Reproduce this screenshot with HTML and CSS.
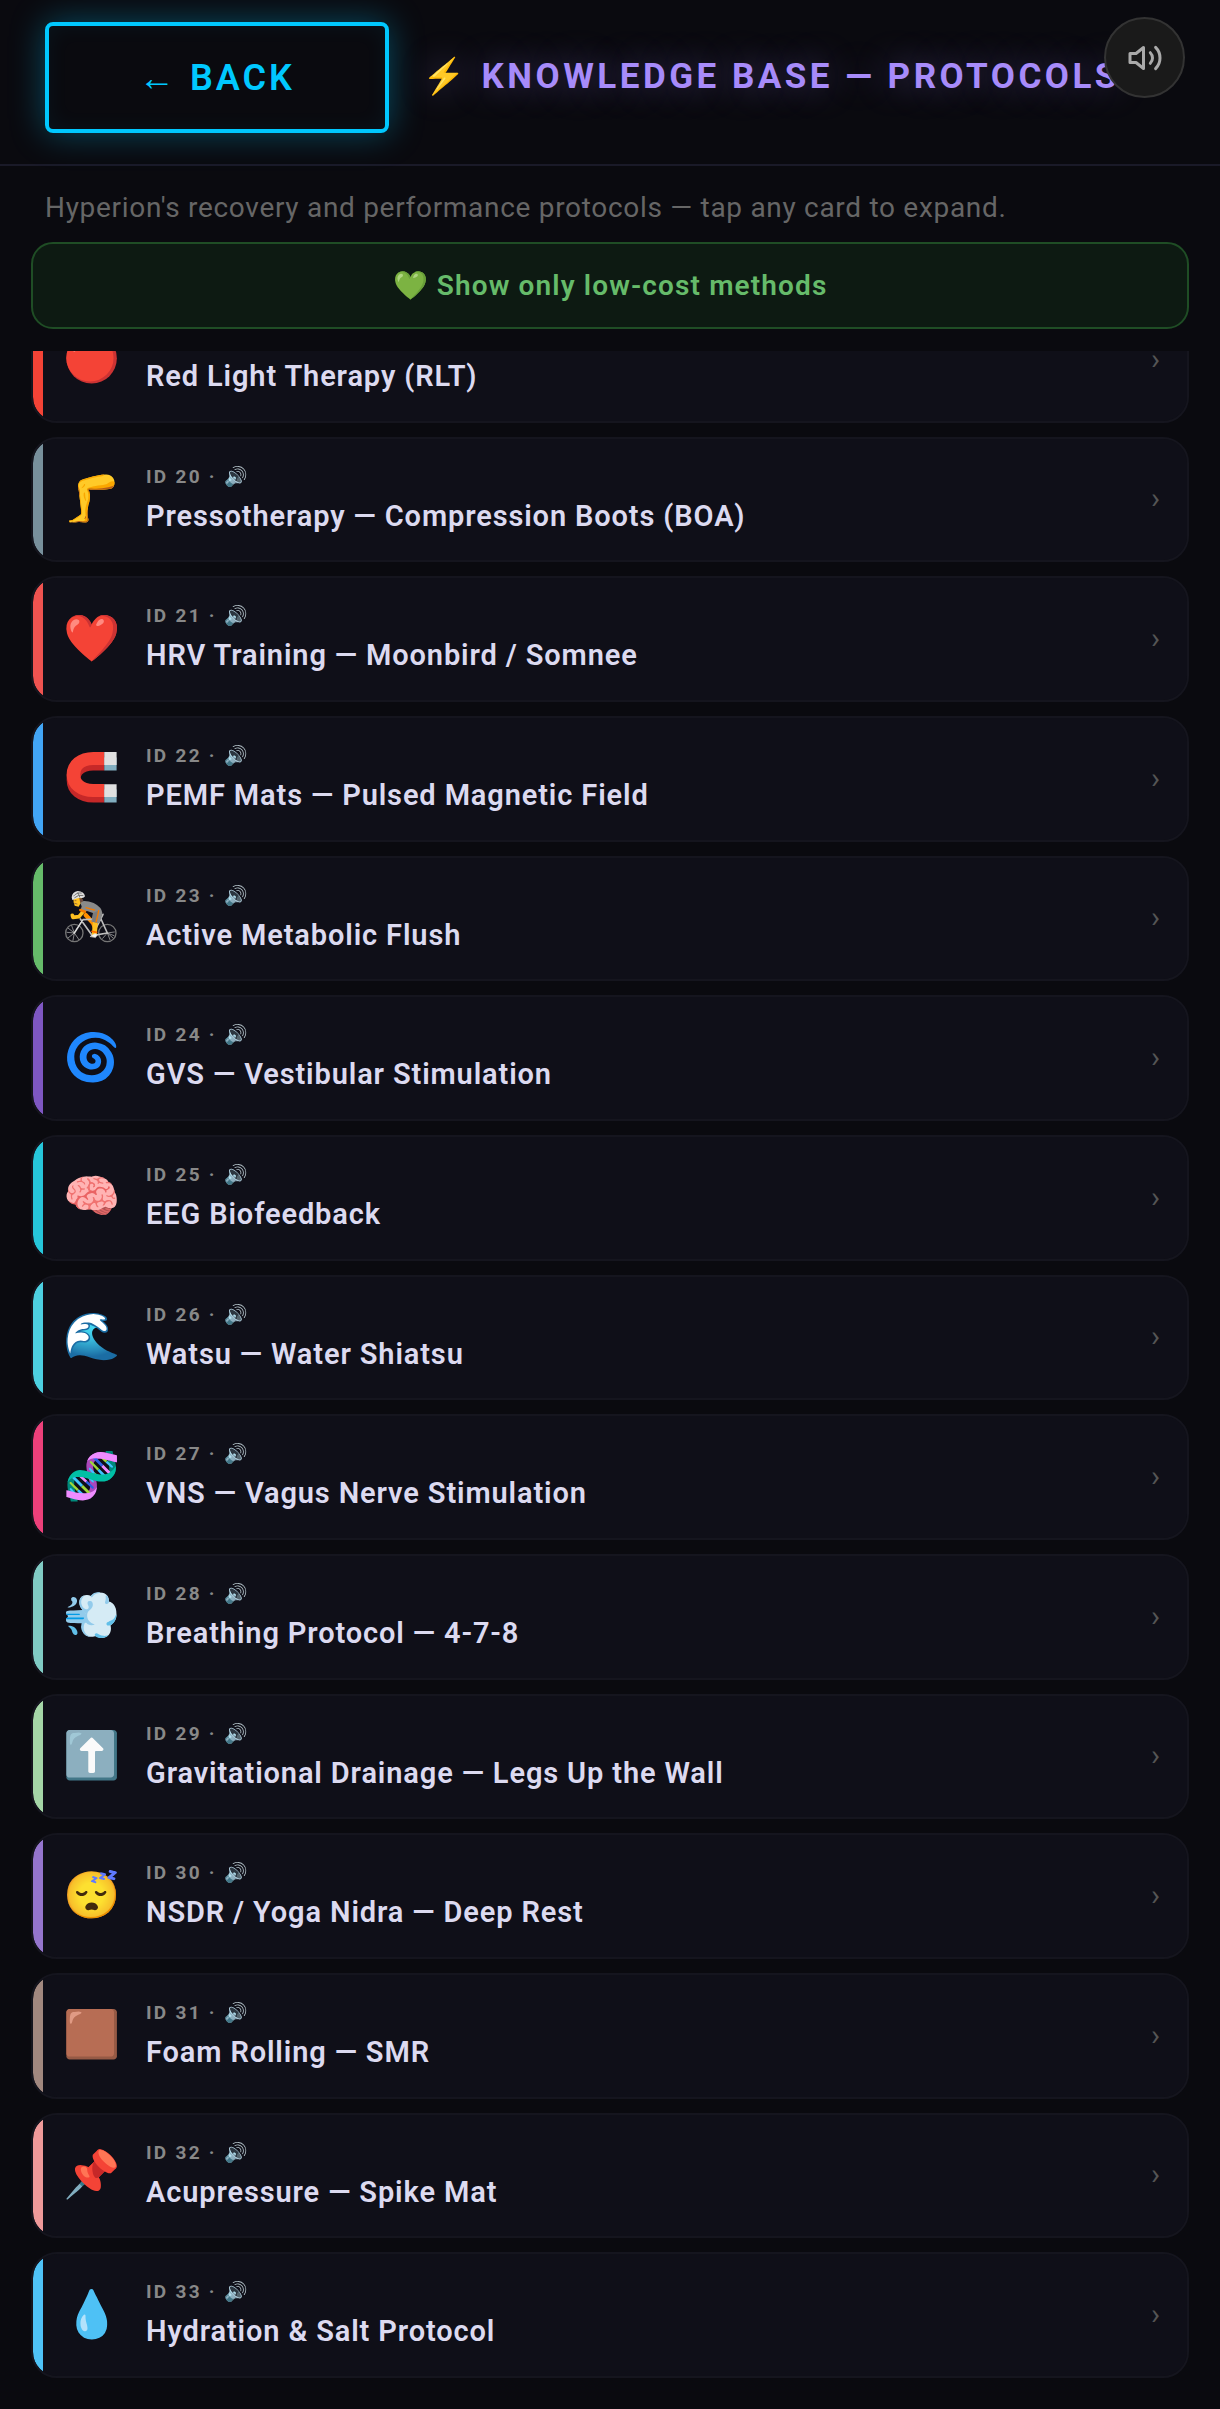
FILE: index.html
```html
<!DOCTYPE html>
<html lang="en">
<head>
  <meta charset="UTF-8">
  <title>Knowledge Base — Protocols</title>
  <meta name="viewport" content="width=device-width, initial-scale=1.0">
  <link rel="stylesheet" href="styles.css">
</head>
<body>

  <button class="mute" aria-label="Toggle sound">
    <svg viewBox="0 0 24 24" fill="none" stroke="currentColor" stroke-width="2" stroke-linecap="round" stroke-linejoin="round">
      <polygon points="11 5 6 9 2 9 2 15 6 15 11 19 11 5"/>
      <path d="M15.54 8.46a5 5 0 0 1 0 7.07"/>
      <path d="M19.07 4.93a10 10 0 0 1 0 14.14"/>
    </svg>
  </button>

  <header class="header">
    <button class="back">← BACK</button>
    <h1>⚡ KNOWLEDGE BASE — PROTOCOLS</h1>
  </header>

  <p class="intro">Hyperion's recovery and performance protocols — tap any card to expand.</p>

  <button class="filter">💚 Show only low-cost methods</button>

  <main class="list" id="list">
    <button class="card red">
      <span class="icon">🔴</span>
      <span class="info"><span class="id">ID 19 · 🔊</span><span class="name">Red Light Therapy (RLT)</span></span>
      <span class="arrow">›</span>
    </button>
    <button class="card slate">
      <span class="icon">🦵</span>
      <span class="info"><span class="id">ID 20 · 🔊</span><span class="name">Pressotherapy — Compression Boots (BOA)</span></span>
      <span class="arrow">›</span>
    </button>
    <button class="card coral">
      <span class="icon">❤️</span>
      <span class="info"><span class="id">ID 21 · 🔊</span><span class="name">HRV Training — Moonbird / Somnee</span></span>
      <span class="arrow">›</span>
    </button>
    <button class="card blue">
      <span class="icon">🧲</span>
      <span class="info"><span class="id">ID 22 · 🔊</span><span class="name">PEMF Mats — Pulsed Magnetic Field</span></span>
      <span class="arrow">›</span>
    </button>
    <button class="card green">
      <span class="icon">
        <svg class="cyclist" viewBox="0 0 156 156" fill="none" stroke-linecap="round" stroke-linejoin="round">
          <!-- wheels -->
          <g stroke="#757575" stroke-width="4">
            <circle cx="28" cy="126" r="26"/>
            <circle cx="127" cy="126" r="26"/>
          </g>
          <g stroke="#bdbdbd" stroke-width="2">
            <path d="M28 126L10 112M28 126L6 124M28 126L10 140M28 126L24 148M28 126L42 146M28 126L20 104"/>
            <path d="M127 126l20 8M127 126l17 15M127 126l8 20M127 126l21-3M127 126l-14 16"/>
          </g>
          <!-- far leg -->
          <path d="M62 72l22 24 6 14" stroke="#ff8f00" stroke-width="13"/>
          <!-- frame -->
          <path d="M28 126L54 86L107 84M46 84L82 134M82 134L114 70M108 84L127 126L82 134" stroke="#bdbdbd" stroke-width="5"/>
          <path d="M28 126L52 88" stroke="#e0e0e0" stroke-width="3"/>
          <!-- near leg -->
          <path d="M91 94L88 130" stroke="#ffc020" stroke-width="15"/>
          <path d="M81 121l14 3" stroke="#ff6d00" stroke-width="5"/>
          <path d="M76 136l14-8 7 3-5 8z" fill="#f5f5f5" stroke="#e0e0e0" stroke-width="2"/>
          <!-- jersey and shorts -->
          <path d="M44 32Q62 26 86 36Q110 48 112 66Q110 82 103 97L79 92L84 66L66 60L46 61L50 46Z" fill="#8a8a8a"/>
          <path d="M84 66l-2 26 14 3 4-36z" fill="#7b7b7b"/>
          <path d="M63 50q12 4 25 7M101 59q-3 18-8 34" stroke="#f57c00" stroke-width="4"/>
          <!-- arm -->
          <path d="M52 65L42 77L24 79L22 73" stroke="#ffc020" stroke-width="11"/>
          <path d="M46 57l14 5" stroke="#f57c00" stroke-width="8"/>
          <!-- head -->
          <path d="M25 22L49 16L50 31L41 47L29 44L26 34Z" fill="#ffc020"/>
          <path d="M43 21q11 0 12 8l-9 8z" fill="#6d4c41"/>
          <path d="M29 37l7 2M30 29h3" stroke="#6d4c41" stroke-width="2"/>
          <path d="M20 19Q22 2 38 0Q57 1 60 16Q56 24 44 20Q32 22 22 27Z" fill="#e0e0e0"/>
          <path d="M26 15Q34 4 49 6M29 20Q39 10 54 13M39 5l5 13" stroke="#757575" stroke-width="3"/>
        </svg>
      </span>
      <span class="info"><span class="id">ID 23 · 🔊</span><span class="name">Active Metabolic Flush</span></span>
      <span class="arrow">›</span>
    </button>
    <button class="card violet">
      <span class="icon">🌀</span>
      <span class="info"><span class="id">ID 24 · 🔊</span><span class="name">GVS — Vestibular Stimulation</span></span>
      <span class="arrow">›</span>
    </button>
    <button class="card cyan">
      <span class="icon">🧠</span>
      <span class="info"><span class="id">ID 25 · 🔊</span><span class="name">EEG Biofeedback</span></span>
      <span class="arrow">›</span>
    </button>
    <button class="card aqua">
      <span class="icon">🌊</span>
      <span class="info"><span class="id">ID 26 · 🔊</span><span class="name">Watsu — Water Shiatsu</span></span>
      <span class="arrow">›</span>
    </button>
    <button class="card pink">
      <span class="icon">🧬</span>
      <span class="info"><span class="id">ID 27 · 🔊</span><span class="name">VNS — Vagus Nerve Stimulation</span></span>
      <span class="arrow">›</span>
    </button>
    <button class="card teal">
      <span class="icon">💨</span>
      <span class="info"><span class="id">ID 28 · 🔊</span><span class="name">Breathing Protocol — 4-7-8</span></span>
      <span class="arrow">›</span>
    </button>
    <button class="card mint">
      <span class="icon">⬆️</span>
      <span class="info"><span class="id">ID 29 · 🔊</span><span class="name">Gravitational Drainage — Legs Up the Wall</span></span>
      <span class="arrow">›</span>
    </button>
    <button class="card purple">
      <span class="icon">😴</span>
      <span class="info"><span class="id">ID 30 · 🔊</span><span class="name">NSDR / Yoga Nidra — Deep Rest</span></span>
      <span class="arrow">›</span>
    </button>
    <button class="card brown">
      <span class="icon">🟫</span>
      <span class="info"><span class="id">ID 31 · 🔊</span><span class="name">Foam Rolling — SMR</span></span>
      <span class="arrow">›</span>
    </button>
    <button class="card rose">
      <span class="icon">📌</span>
      <span class="info"><span class="id">ID 32 · 🔊</span><span class="name">Acupressure — Spike Mat</span></span>
      <span class="arrow">›</span>
    </button>
    <button class="card sky">
      <span class="icon">💧</span>
      <span class="info"><span class="id">ID 33 · 🔊</span><span class="name">Hydration &amp; Salt Protocol</span></span>
      <span class="arrow">›</span>
    </button>
  </main>

  <script>
    // open the list at its last protocol
    const list = document.getElementById("list");
    list.scrollTop = list.scrollHeight;
  </script>

</body>
</html>
```
FILE: styles.css
```css
:root {
  --bg: #0a0a0f;
  --card: #0f0f18;
  --line: #15151e;
  --text: #dcdaf0;
  --accent: #00c8ff;
  --title: #a78bfa;
}

* {
  box-sizing: border-box;
}

body {
  margin: 0;
  height: 100vh;
  display: flex;
  flex-direction: column;
  background: var(--bg);
  color: var(--text);
  font-family: Roboto, sans-serif;
}

button {
  font-family: inherit;
  cursor: pointer;
}

.header {
  display: flex;
  align-items: center;
  gap: 33px;
  padding: 22px 45px 31px;
  border-bottom: 2px solid #1a1a28;
}

.back {
  flex-shrink: 0;
  padding: 31px 90px 29px;
  border: 4px solid var(--accent);
  border-radius: 8px;
  background: transparent;
  color: var(--accent);
  font-size: 36px;
  line-height: 43px;
  font-weight: 600;
  letter-spacing: 3px;
  box-shadow: 0 0 34px rgba(0, 200, 255, 0.35), inset 0 0 22px rgba(0, 200, 255, 0.06);
}

h1 {
  margin: 0;
  padding-bottom: 3px;
  color: var(--title);
  font-size: 35px;
  font-weight: 700;
  letter-spacing: 0.1em;
  white-space: nowrap;
  text-shadow: 0 0 34px rgba(167, 139, 250, 0.4);
}

.mute {
  position: fixed;
  top: 17px;
  right: 35px;
  z-index: 10;
  display: flex;
  align-items: center;
  justify-content: center;
  width: 81px;
  height: 81px;
  padding: 0;
  border: 2px solid #333;
  border-radius: 50%;
  background: #1a1a1a;
  color: #aaa;
}

.mute svg {
  width: 36px;
  height: 36px;
}

.intro {
  margin: 0;
  padding: 22px 45px 14px;
  color: #666;
  font-size: 28px;
  line-height: 40px;
  letter-spacing: 0.025em;
}

.filter {
  margin: 0 31px 22px;
  padding: 22px;
  border: 2px solid #1f4d25;
  border-radius: 22px;
  background: #0d1a12;
  color: #66bb6a;
  font-size: 28px;
  line-height: 39px;
  font-weight: 600;
  letter-spacing: 0.04em;
}

.list {
  flex: 1;
  min-height: 0;
  display: flex;
  flex-direction: column;
  gap: 14px;
  padding: 0 31px 31px;
  overflow-y: auto;
  scrollbar-width: none;
}

.card {
  flex-shrink: 0;
  display: flex;
  align-items: center;
  gap: 24px;
  padding: 25px 27px;
  border: 2px solid var(--line);
  border-radius: 26px;
  background: linear-gradient(to right, var(--stripe) 10px, var(--card) 10px);
  background-origin: padding-box;
  background-clip: padding-box;
  color: var(--text);
  text-align: left;
}

.icon {
  width: 62px;
  padding-bottom: 3px;
  font-size: 46px;
  line-height: 1;
  text-align: center;
}

.cyclist {
  display: block;
  width: 52px;
  height: 52px;
  margin: 0 auto;
}

.info {
  flex: 1;
  display: flex;
  flex-direction: column;
  gap: 7px;
}

.id {
  color: #888;
  font-size: 19px;
  line-height: 1.42;
  font-weight: 700;
  letter-spacing: 0.12em;
}

.name {
  font-size: 29px;
  line-height: 1.3;
  font-weight: 600;
  letter-spacing: 0.03em;
}

.arrow {
  padding-bottom: 3px;
  color: #555;
  font-size: 30px;
}

.red { --stripe: #f44336; }
.slate { --stripe: #78909c; }
.coral { --stripe: #ef5350; }
.blue { --stripe: #42a5f5; }
.green { --stripe: #66bb6a; }
.violet { --stripe: #7e57c2; }
.cyan { --stripe: #26c6da; }
.aqua { --stripe: #4dd0e1; }
.pink { --stripe: #ec407a; }
.teal { --stripe: #80cbc4; }
.mint { --stripe: #a5d6a7; }
.purple { --stripe: #9575cd; }
.brown { --stripe: #a1887f; }
.rose { --stripe: #ef9a9a; }
.sky { --stripe: #4fc3f7; }
```
